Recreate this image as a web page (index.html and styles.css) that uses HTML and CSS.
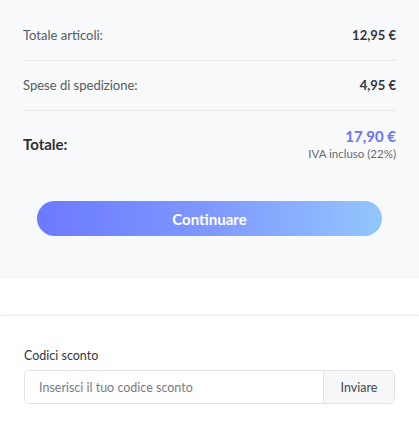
FILE: index.html
```html
<!DOCTYPE html>
<html lang="it">
<head>
<meta charset="utf-8">
<link rel="stylesheet" href="styles.css">
</head>
<body>
<section class="summary">
  <div class="row">
    <span class="label">Totale articoli:</span>
    <span class="value">12,95 €</span>
  </div>
  <div class="row">
    <span class="label">Spese di spedizione:</span>
    <span class="value">4,95 €</span>
  </div>
  <div class="total">
    <span class="total-label">Totale:</span>
    <div class="total-right">
      <div class="total-price">17,90 €</div>
      <div class="vat">IVA incluso (22%)</div>
    </div>
  </div>
  <button class="continue">Continuare</button>
</section>
<section class="discount">
  <div class="discount-title">Codici sconto</div>
  <div class="discount-form">
    <input class="discount-input" type="text" placeholder="Inserisci il tuo codice sconto">
    <button class="discount-send">Inviare</button>
  </div>
</section>
</body>
</html>
```
FILE: styles.css
```css
* { box-sizing: border-box; }
body {
  margin: 0;
  background: #ffffff;
  font-family: Lato, "Open Sans", sans-serif;
  color: #333;
}
.summary {
  background: #f8f9fb;
  height: 279px;
  padding: 11px 23px 0;
}
.row {
  display: flex;
  justify-content: space-between;
  align-items: center;
  padding: 15px 0 16px;
  line-height: 18px;
  border-bottom: 1px solid #e6e8eb;
}
.label {
  font-size: 13px;
  color: #555a60;
}
.value {
  font-size: 13px;
  font-weight: 700;
  color: #33363b;
}
.total {
  display: flex;
  justify-content: space-between;
  align-items: center;
  padding-top: 16px;
}
.total-label {
  font-size: 15px;
  font-weight: 700;
  color: #2d3035;
}
.total-right { text-align: right; }
.total-price {
  font-size: 15px;
  font-weight: 700;
  line-height: 18px;
  color: #6b72ff;
}
.vat {
  font-size: 11.5px;
  line-height: 14px;
  margin-top: 2px;
  color: #666a70;
}
.continue {
  display: block;
  width: calc(100% - 28px);
  margin: 40px 14px 0;
  height: 35px;
  border: none;
  border-radius: 18px;
  background: linear-gradient(90deg, #6a7aff 0%, #7f98ff 50%, #93c6fd 100%);
  color: #fff;
  font-family: inherit;
  font-size: 15px;
  font-weight: 700;
}
.discount {
  margin-top: 36px;
  border-top: 1px solid #eceef1;
  box-shadow: 0 -1px 2px rgba(0,0,0,0.03);
  padding: 32px 24px 0;
}
.discount-title {
  font-size: 12.5px;
  line-height: 16px;
  color: #33363b;
  margin-bottom: 6px;
}
.discount-form {
  display: flex;
  height: 34px;
  border: 1px solid #dfe2e6;
  border-radius: 5px;
  overflow: hidden;
}
.discount-input {
  flex: 1;
  min-width: 0;
  border: none;
  outline: none;
  padding: 0 14px;
  font-family: inherit;
  font-size: 12.5px;
  color: #333;
  background: #fff;
}
.discount-input::placeholder { color: #767b82; }
.discount-send {
  width: 71px;
  border: none;
  border-left: 1px solid #dfe2e6;
  background: #f6f7f9;
  font-family: inherit;
  font-size: 12.5px;
  color: #44474c;
}
```
